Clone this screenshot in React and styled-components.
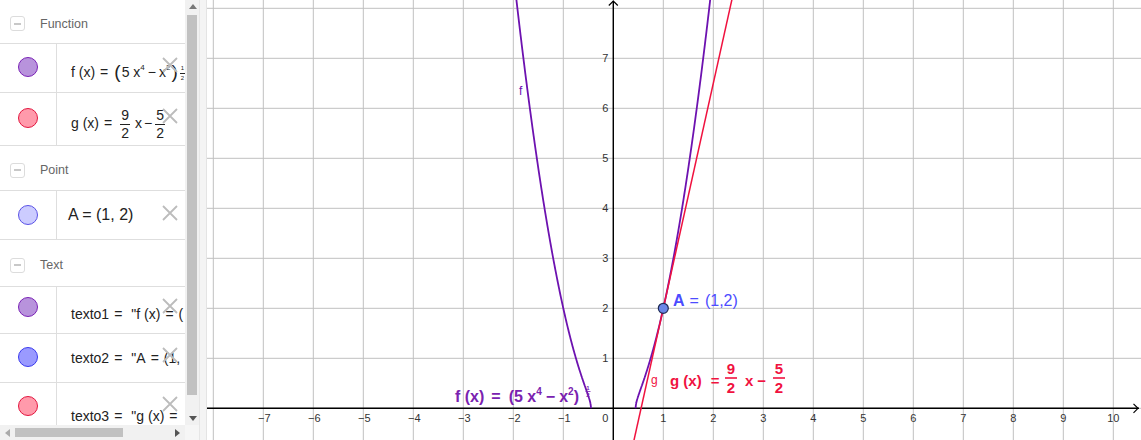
import React from 'react'
import styled, { createGlobalStyle } from 'styled-components'

const GlobalStyle = createGlobalStyle`
  html, body { margin: 0; padding: 0; background: #fff; }
  body { font-family: "Liberation Sans", Arial, sans-serif; overflow: hidden; }
  * { box-sizing: border-box; }
`

const Page = styled.div`
  display: flex;
  width: 1141px;
  height: 440px;
  overflow: hidden;
  background: #fff;
`

const AlgebraPanel = styled.div`
  display: grid;
  grid-template-columns: 185px 15px;
  grid-template-rows: 425px 15px;
  width: 200px;
  flex-shrink: 0;
`

const List = styled.div`
  overflow: hidden;
`

const Header = styled.div`
  display: flex;
  align-items: center;
  gap: 15px;
  height: ${p => p.$h}px;
  padding: 4px 0 0 10px;
  border-bottom: 1px solid #dedede;
  color: #666;
  font-size: 12.5px;
`

const Toggle = styled.span`
  display: flex;
  align-items: center;
  justify-content: center;
  width: 15px;
  height: 15px;
  border: 1px solid #dcdcdc;
  border-radius: 3px;
  &::before {
    content: '';
    width: 7px;
    height: 2px;
    background: #c8c8c8;
  }
`

const Item = styled.div`
  position: relative;
  display: grid;
  grid-template-columns: 57px 1fr;
  height: ${p => p.$h}px;
  border-bottom: 1px solid #dedede;
`

const MarbleCell = styled.div`
  display: flex;
  align-items: center;
  justify-content: center;
  border-right: 1px solid #dedede;
  padding-bottom: ${p => p.$pb || 0}px;
`

const Marble = styled.span`
  width: 20px;
  height: 20px;
  border-radius: 50%;
  background: ${p => p.$fill};
  border: 1px solid ${p => p.$stroke};
`

const Formula = styled.div`
  display: flex;
  align-items: center;
  padding: ${p => p.$pt || 0}px 0 0 ${p => p.$pl || 14}px;
  white-space: nowrap;
  overflow: hidden;
  font-size: ${p => p.$size || 14}px;
  color: #222;
`

const Expr = styled.span`
  display: inline-block;
  white-space: nowrap;
`

const Sup = styled.sup`
  font-size: 8px;
  vertical-align: 7px;
  line-height: 0;
`

const Paren = styled.span`
  font-size: 19px;
  margin: 0 1px;
  vertical-align: -1px;
  line-height: 0;
`

const Frac = styled.span`
  display: inline-flex;
  flex-direction: column;
  align-items: center;
  vertical-align: middle;
  font-size: ${p => p.$size || 14}px;
  line-height: 1.05;
  margin: 0 ${p => p.$gap || 5}px;
`

const Num = styled.span`
  padding: 0 1px 1px;
  border-bottom: 1px solid currentColor;
`

const Den = styled.span`
  padding-top: 1px;
`

const Space = styled.span`
  display: inline-block;
  width: ${p => p.$w}px;
`

const DeleteButton = styled.svg`
  position: absolute;
  top: ${p => p.$top || 13}px;
  right: 7px;
  width: 16px;
  height: 16px;
`

const VScroll = styled.div`
  display: flex;
  flex-direction: column;
  background: #f1f1f1;
  border-right: 1px solid #e6e6e6;
`

const HScroll = styled.div`
  display: flex;
  background: #f1f1f1;
`

const Corner = styled.div`
  background: #f6f6f6;
  border-right: 1px solid #e6e6e6;
`

const Arrow = styled.div`
  flex: 0 0 15px;
  height: 15px;
  width: 15px;
  display: flex;
  align-items: center;
  justify-content: center;
  &::before {
    content: '';
    border: 4px solid transparent;
    ${p => p.$dir === 'up' && 'border-bottom: 5px solid #777; border-top-width: 0; margin-bottom: 2px;'}
    ${p => p.$dir === 'down' && 'border-top: 5px solid #555; border-bottom-width: 0; margin-top: 2px;'}
    ${p => p.$dir === 'left' && 'border-right: 5px solid #aaa; border-left-width: 0;'}
    ${p => p.$dir === 'right' && 'border-left: 5px solid #555; border-right-width: 0;'}
  }
`

const Track = styled.div`
  flex: 1;
  display: flex;
  flex-direction: ${p => (p.$horizontal ? 'row' : 'column')};
  padding: ${p => (p.$horizontal ? '3px 0' : '0 2px')};
`

const Thumb = styled.div`
  background: #c1c1c1;
  ${p => (p.$horizontal ? `width: ${p.$len}px; height: 100%;` : `height: ${p.$len}px; width: 100%;`)}
`

const Splitter = styled.div`
  flex: 0 0 7px;
  background: #f4f4f4;
  border-right: 1px solid #e4e4e4;
`

const Graph = styled.div`
  flex: 1;
  height: 440px;
  svg { display: block; }
`

const Cross = ({ top }) => (
  <DeleteButton $top={top} viewBox="0 0 16 16">
    <path d="M1 1L15 15M15 1L1 15" stroke="#bcbcbc" strokeWidth="1.8" fill="none" />
  </DeleteButton>
)

const purple = { fill: '#b893dc', stroke: '#7a22b6' }
const red = { fill: '#ff9aab', stroke: '#e3163f' }
const lightBlue = { fill: '#ccccff', stroke: '#5a52e6' }
const blue = { fill: '#9a9aff', stroke: '#3a3aee' }

const AlgebraView = () => (
  <AlgebraPanel>
    <List>
      <Header $h={44}><Toggle />Function</Header>
      <Item $h={49}>
        <MarbleCell $pb={3}><Marble $fill={purple.fill} $stroke={purple.stroke} /></MarbleCell>
        <Formula $pt={9}>
          <Expr>
            f (x)<Space $w={5} />=<Space $w={5} />
            <Paren>(</Paren>5 x<Sup>4</Sup><Space $w={3} />−<Space $w={3} />x<Sup>2</Sup><Paren>)</Paren>
            <Frac $size={6} $gap={1}><Num>1</Num><Den>2</Den></Frac>
          </Expr>
        </Formula>
        <Cross top={13} />
      </Item>
      <Item $h={53}>
        <MarbleCell $pb={2}><Marble $fill={red.fill} $stroke={red.stroke} /></MarbleCell>
        <Formula $pt={10}>
          <Expr>
            g (x)<Space $w={5} />=<Space $w={3} />
            <Frac><Num>9</Num><Den>2</Den></Frac>
            x<Space $w={2} />−<Frac $gap={3}><Num>5</Num><Den>2</Den></Frac>
          </Expr>
        </Formula>
        <Cross top={15} />
      </Item>
      <Header $h={45}><Toggle />Point</Header>
      <Item $h={49}>
        <MarbleCell><Marble $fill={lightBlue.fill} $stroke={lightBlue.stroke} /></MarbleCell>
        <Formula $pl={11} $size={16}><Expr>A = (1, 2)</Expr></Formula>
        <Cross top={14} />
      </Item>
      <Header $h={47}><Toggle />Text</Header>
      <Item $h={47}>
        <MarbleCell $pb={6}><Marble $fill={purple.fill} $stroke={purple.stroke} /></MarbleCell>
        <Formula $pt={7}>
          <Expr>texto1<Space $w={5} />=<Space $w={9} />"f (x)<Space $w={5} />=<Space $w={5} />(</Expr>
        </Formula>
        <Cross top={11} />
      </Item>
      <Item $h={49}>
        <MarbleCell $pb={2}><Marble $fill={blue.fill} $stroke={blue.stroke} /></MarbleCell>
        <Formula>
          <Expr>texto2<Space $w={5} />=<Space $w={9} />"A<Space $w={5} />=<Space $w={5} />(1,</Expr>
        </Formula>
        <Cross top={13} />
      </Item>
      <Item $h={60}>
        <MarbleCell $pb={14}><Marble $fill={red.fill} $stroke={red.stroke} /></MarbleCell>
        <Formula $pt={6}>
          <Expr>texto3<Space $w={5} />=<Space $w={9} />"g (x)<Space $w={5} />=</Expr>
        </Formula>
        <Cross top={13} />
      </Item>
    </List>
    <VScroll>
      <Arrow $dir="up" />
      <Track><Thumb $len={380} /></Track>
      <Arrow $dir="down" />
    </VScroll>
    <HScroll>
      <Arrow $dir="left" />
      <Track $horizontal><Thumb $horizontal $len={108} /></Track>
      <Arrow $dir="right" />
    </HScroll>
    <Corner />
  </AlgebraPanel>
)

const ox = 613.3
const oy = 408.3
const unit = 50
const px = x => ox + x * unit
const py = y => oy - y * unit
const f = x => Math.sqrt(Math.max(0, 5 * x ** 4 - x ** 2))

const branch = sign => {
  const r = 1 / Math.sqrt(5)
  const pts = []
  for (let i = 0; i <= 240; i++) {
    const t = i / 240
    const x = sign * (r + t * t * (2.05 - r))
    pts.push(`${px(x).toFixed(2)},${py(f(x)).toFixed(2)}`)
  }
  return 'M' + pts.join('L')
}

const PURPLE = '#6d12b0'
const LABEL_PURPLE = '#7a22b0'
const RED = '#f0123f'
const BLUE = '#4c4cff'

const xs = Array.from({ length: 19 }, (_, i) => i - 8)
const ys = Array.from({ length: 9 }, (_, i) => i)

const GraphicsView = () => (
  <Graph>
    <svg width="934" height="440" viewBox="207 0 934 440" fontFamily="'Liberation Sans', Arial, sans-serif">
      {xs.map(k => (
        <line key={'v' + k} x1={px(k)} x2={px(k)} y1="0" y2="440" stroke="#c0c0c0" strokeWidth="1" />
      ))}
      {ys.map(k => (
        <line key={'h' + k} x1="207" x2="1141" y1={py(k)} y2={py(k)} stroke="#c0c0c0" strokeWidth="1" />
      ))}
      <line x1="207" x2="1139" y1={oy} y2={oy} stroke="#000" strokeWidth="1.4" />
      <line x1={ox} x2={ox} y1="1" y2="440" stroke="#000" strokeWidth="1.4" />
      <path d={`M${ox - 4.5},5.5L${ox},1L${ox + 4.5},5.5`} stroke="#000" strokeWidth="1.2" fill="none" />
      <path d={`M1133.5,${oy - 4.5}L1138,${oy}L1133.5,${oy + 4.5}`} stroke="#000" strokeWidth="1.2" fill="none" />
      <g fontSize="11" fill="#333">
        {xs.filter(k => k !== 0 && k >= -7 && k <= 10).map(k => (
          <text key={'lx' + k} x={px(k) + (k < 0 ? 1 : 0)} y="422" textAnchor="middle">
            {k < 0 ? '−' + -k : k}
          </text>
        ))}
        <text x={ox - 8} y="422" textAnchor="middle">0</text>
        {ys.filter(k => k > 0 && k < 8).map(k => (
          <text key={'ly' + k} x={ox - 5} y={py(k) + 4} textAnchor="end">{k}</text>
        ))}
      </g>
      <path d={branch(-1)} stroke={PURPLE} strokeWidth="1.8" fill="none" />
      <path d={branch(1)} stroke={PURPLE} strokeWidth="1.8" fill="none" />
      <line x1={px(0.3)} y1={py(4.5 * 0.3 - 2.5)} x2={px(2.5)} y2={py(4.5 * 2.5 - 2.5)} stroke={RED} strokeWidth="1.5" />
      <circle cx={px(1)} cy={py(2)} r="5" fill="#6a86e6" stroke="#1f2a55" strokeWidth="1.2" />

      <text x="519" y="95" fontSize="12" fill={PURPLE}>f</text>
      <text x="651" y="384" fontSize="12" fill={RED}>g</text>

      <text x="673" y="306" fontSize="16" fill={BLUE}>
        <tspan fontWeight="bold">A</tspan><tspan dx="5">=</tspan><tspan dx="6">(1,2)</tspan>
      </text>

      <text x="455" y="402" fontSize="16" fontWeight="bold" fill={LABEL_PURPLE}>
        f (x)<tspan dx="7">=</tspan><tspan dx="8">(5 x</tspan>
        <tspan fontSize="10" dy="-7">4</tspan>
        <tspan dy="7" dx="4">−</tspan>
        <tspan dx="4">x</tspan>
        <tspan fontSize="10" dy="-7">2</tspan>
        <tspan dy="7">)</tspan>
      </text>
      <g fontSize="6" fontWeight="bold" fill={LABEL_PURPLE} textAnchor="middle">
        <text x="588" y="390">1</text>
        <line x1="585.5" x2="590.5" y1="391.5" y2="391.5" stroke={LABEL_PURPLE} strokeWidth="0.8" />
        <text x="588" y="397">2</text>
      </g>

      <g fill={RED} fontWeight="bold" fontSize="15">
        <text x="670" y="386">g (x)<tspan dx="9">=</tspan></text>
        <g textAnchor="middle">
          <text x="731" y="374">9</text>
          <text x="731" y="393">2</text>
          <text x="779" y="374">5</text>
          <text x="779" y="393">2</text>
        </g>
        <line x1="725" x2="737" y1="378" y2="378" stroke={RED} strokeWidth="1.6" />
        <line x1="773" x2="785" y1="378" y2="378" stroke={RED} strokeWidth="1.6" />
        <text x="745" y="386">x<tspan dx="4">−</tspan></text>
      </g>
    </svg>
  </Graph>
)

const App = () => (
  <>
    <GlobalStyle />
    <Page>
      <AlgebraView />
      <Splitter />
      <GraphicsView />
    </Page>
  </>
)

export default App
